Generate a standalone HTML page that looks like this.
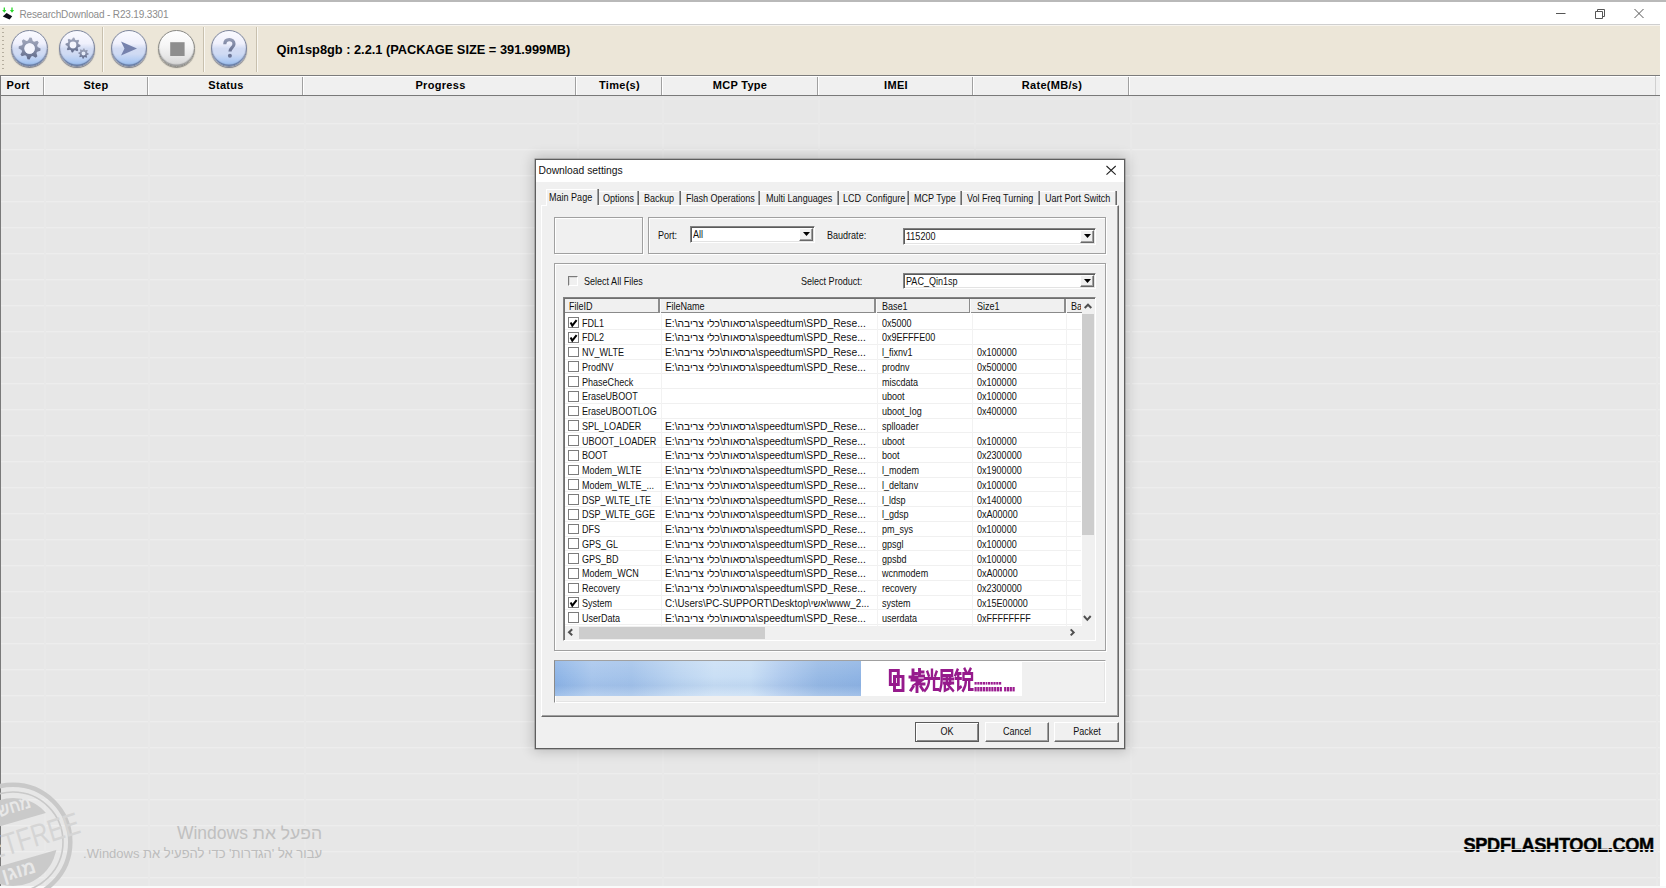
<!DOCTYPE html>
<html><head><meta charset="utf-8">
<style>
*{box-sizing:border-box}
html,body{margin:0;padding:0}
body{width:1666px;height:888px;overflow:hidden;position:relative;background:#fff;font-family:"Liberation Sans",sans-serif;color:#000}
.a{position:absolute}
.t{position:absolute;white-space:nowrap;line-height:1}
.hs{position:absolute;top:77px;width:2px;height:18px;background:#a0a0a0;border-right:1px solid #fff}
.ht{position:absolute;top:79px;font-size:11px;font-weight:bold;line-height:12px;text-align:center;white-space:nowrap;letter-spacing:0.3px}
.d{position:absolute;white-space:nowrap;line-height:1;font-size:10.5px;transform:scaleX(.86);transform-origin:0 0;color:#111}
.tb{position:absolute;border-radius:50%}
</style></head><body>

<div class="a" style="left:0;top:0;width:1666px;height:2px;background:#b9b9b9"></div>
<div class="a" style="left:0;top:24px;width:1660px;height:1px;background:#cfcfcf"></div>
<div class="t" style="left:19.5px;top:10px;font-size:10px;color:#8c8c8c;letter-spacing:-0.15px">ResearchDownload - R23.19.3301</div>
<svg class="a" style="left:0;top:0" width="18" height="24" viewBox="0 0 18 24">
<path d="M4.3 7.5v3.5M12 7.5v3.5" stroke="#2bd62b" stroke-width="1.3"/>
<path d="M2.2 10h4.2L4.3 12.8zM9.9 10h4.2L12 12.8z" fill="#2bd62b"/>
<path d="M2.8 16.4L6.6 13l5.6 3.3-2.6 3.3z" fill="#0d0d18"/>
</svg>
<svg class="a" style="left:1550px;top:4px" width="100" height="20" viewBox="0 0 100 20">
<path d="M6 9.5h9.5" stroke="#555" stroke-width="1"/>
<path d="M45.5 7.5h7v7h-7z M47.5 7.5v-2h7v7h-2" stroke="#555" stroke-width="1" fill="none"/>
<path d="M84.5 5l9 9M93.5 5l-9 9" stroke="#555" stroke-width="1"/>
</svg>
<div class="a" style="left:0;top:25px;width:1660px;height:50px;background:#ece6d8;border-top:1px solid #f7f4ee"></div>
<div class="a" style="left:0;top:75px;width:1660px;height:1px;background:#7c7c7c"></div>
<div class="a" style="left:2px;top:28px;width:2px;height:44px;background:repeating-linear-gradient(#b5ae9f 0 1px,transparent 1px 4px)"></div>
<div class="a" style="left:102px;top:27px;width:2px;height:45px;border-left:1px solid #c8c0ae;border-right:1px solid #faf8f2"></div>
<div class="a" style="left:203px;top:27px;width:2px;height:45px;border-left:1px solid #c8c0ae;border-right:1px solid #faf8f2"></div>
<div class="a" style="left:256px;top:27px;width:2px;height:45px;border-left:1px solid #c8c0ae;border-right:1px solid #faf8f2"></div>
<div class="tb" style="left:11.200000000000003px;top:30.300000000000004px;width:36.8px;height:36.8px;background:linear-gradient(180deg,#fafaff 0%,#eff0fc 36%,#d3dcf3 50%,#cfdaf3 66%,#b9cff3 80%,#a3c3f0 92%);border:1px solid #7e879f;box-shadow:inset 0 -1.5px 1px rgba(50,60,95,.55),0 1px 1px rgba(40,50,80,.6)"></div>
<div class="tb" style="left:58.6px;top:30.300000000000004px;width:36.8px;height:36.8px;background:linear-gradient(180deg,#fafaff 0%,#eff0fc 36%,#d3dcf3 50%,#cfdaf3 66%,#b9cff3 80%,#a3c3f0 92%);border:1px solid #7e879f;box-shadow:inset 0 -1.5px 1px rgba(50,60,95,.55),0 1px 1px rgba(40,50,80,.6)"></div>
<div class="tb" style="left:110.6px;top:30.300000000000004px;width:36.8px;height:36.8px;background:linear-gradient(180deg,#fafaff 0%,#eff0fc 36%,#d3dcf3 50%,#cfdaf3 66%,#b9cff3 80%,#a3c3f0 92%);border:1px solid #7e879f;box-shadow:inset 0 -1.5px 1px rgba(50,60,95,.55),0 1px 1px rgba(40,50,80,.6)"></div>
<div class="tb" style="left:158.1px;top:30.300000000000004px;width:36.8px;height:36.8px;background:linear-gradient(180deg,#ffffff 0%,#f6f6f6 40%,#e8e8e8 70%,#d2d2d2 100%);border:1px solid #8a8a86;box-shadow:inset 0 -1.5px 1px rgba(80,80,80,.45),0 1px 1px rgba(60,60,60,.55)"></div>
<div class="tb" style="left:210.6px;top:30.300000000000004px;width:36.8px;height:36.8px;background:linear-gradient(180deg,#fafaff 0%,#eff0fc 36%,#d3dcf3 50%,#cfdaf3 66%,#b9cff3 80%,#a3c3f0 92%);border:1px solid #7e879f;box-shadow:inset 0 -1.5px 1px rgba(50,60,95,.55),0 1px 1px rgba(40,50,80,.6)"></div>
<svg class="a" style="left:0;top:25px" width="260" height="50" viewBox="0 25 260 50"><defs><linearGradient id="qg" x1="0" y1="0" x2="0" y2="1"><stop offset="0" stop-color="#9098b2"/><stop offset="1" stop-color="#6a7392"/></linearGradient><linearGradient id="gg" x1="0" y1="0" x2="0" y2="1"><stop offset="0" stop-color="#a3a9bd"/><stop offset="0.45" stop-color="#8a92ab"/><stop offset="1" stop-color="#5f6989"/></linearGradient></defs><path fill-rule="evenodd" fill="url(#gg)" d="M29.60 37.50 L31.75 37.71 L32.74 40.92 L34.16 41.68 L37.38 40.72 L38.75 42.39 L37.18 45.36 L37.64 46.90 L40.60 48.50 L40.39 50.65 L37.18 51.64 L36.42 53.06 L37.38 56.28 L35.71 57.65 L32.74 56.08 L31.20 56.54 L29.60 59.50 L27.45 59.29 L26.46 56.08 L25.04 55.32 L21.82 56.28 L20.45 54.61 L22.02 51.64 L21.56 50.10 L18.60 48.50 L18.81 46.35 L22.02 45.36 L22.78 43.94 L21.82 40.72 L23.49 39.35 L26.46 40.92 L28.00 40.46Z M34.800000000000004 48.5 A5.2 5.2 0 1 0 24.400000000000002 48.5 A5.2 5.2 0 1 0 34.800000000000004 48.5Z"/><circle cx="29.6" cy="48.5" r="5.2" fill="#f4f5fd"/><circle cx="73" cy="45" r="3.4" fill="#f4f5fd"/><circle cx="83.5" cy="53.5" r="2" fill="#e6ecf9"/><path fill-rule="evenodd" fill="url(#gg)" d="M73.00 37.50 L74.46 37.64 L75.14 39.83 L76.11 40.34 L78.30 39.70 L79.24 40.83 L78.17 42.86 L78.49 43.91 L80.50 45.00 L80.36 46.46 L78.17 47.14 L77.66 48.11 L78.30 50.30 L77.17 51.24 L75.14 50.17 L74.09 50.49 L73.00 52.50 L71.54 52.36 L70.86 50.17 L69.89 49.66 L67.70 50.30 L66.76 49.17 L67.83 47.14 L67.51 46.09 L65.50 45.00 L65.64 43.54 L67.83 42.86 L68.34 41.89 L67.70 39.70 L68.83 38.76 L70.86 39.83 L71.91 39.51Z M76.4 45 A3.4 3.4 0 1 0 69.6 45 A3.4 3.4 0 1 0 76.4 45Z"/><path fill-rule="evenodd" fill="url(#gg)" d="M83.50 48.30 L84.51 48.40 L84.95 49.99 L85.61 50.34 L87.18 49.82 L87.82 50.61 L87.01 52.05 L87.23 52.76 L88.70 53.50 L88.60 54.51 L87.01 54.95 L86.66 55.61 L87.18 57.18 L86.39 57.82 L84.95 57.01 L84.24 57.23 L83.50 58.70 L82.49 58.60 L82.05 57.01 L81.39 56.66 L79.82 57.18 L79.18 56.39 L79.99 54.95 L79.77 54.24 L78.30 53.50 L78.40 52.49 L79.99 52.05 L80.34 51.39 L79.82 49.82 L80.61 49.18 L82.05 49.99 L82.76 49.77Z M85.5 53.5 A2 2 0 1 0 81.5 53.5 A2 2 0 1 0 85.5 53.5Z"/><path d="M121 41.5l16 7-16 7 3.5-7z" fill="#7682ad"/><rect x="170.2" y="42.2" width="14.4" height="13.8" fill="#8e8e8e"/><path d="M224.8 44.3c0-3.2 2.1-4.6 4.6-4.6s4.6 1.6 4.6 4.2c0 3.6-4 4-4 7.6" stroke="url(#qg)" stroke-width="3.2" fill="none"/><circle cx="229.9" cy="55.8" r="2" fill="#6d7696"/></svg>
<div class="t" style="left:276.5px;top:43.5px;font-size:12.8px;font-weight:bold">Qin1sp8gb : 2.2.1 (PACKAGE SIZE = 391.999MB)</div>
<div class="a" style="left:0;top:76px;width:1660px;height:20px;background:#f0f0f0;border-top:1px solid #fff;border-bottom:1px solid #7a7a7a"></div>
<div class="ht" style="left:6.5px">Port</div>
<div class="ht" style="left:44px;width:104px">Step</div>
<div class="ht" style="left:148px;width:156px">Status</div>
<div class="ht" style="left:304px;width:273px">Progress</div>
<div class="ht" style="left:577px;width:85px">Time(s)</div>
<div class="ht" style="left:662px;width:156px">MCP Type</div>
<div class="ht" style="left:818px;width:156px">IMEI</div>
<div class="ht" style="left:974px;width:156px">Rate(MB/s)</div>
<div class="hs" style="left:42.5px"></div>
<div class="hs" style="left:146.5px"></div>
<div class="hs" style="left:302px"></div>
<div class="hs" style="left:575px"></div>
<div class="hs" style="left:661px"></div>
<div class="hs" style="left:817px"></div>
<div class="hs" style="left:972px"></div>
<div class="hs" style="left:1128px"></div>
<div class="a" style="left:1655px;top:76px;width:1px;height:19px;background:#d0d0d0"></div>
<div class="a" style="left:1px;top:96px;width:1659px;height:790px;background:#e7e7e7"></div>
<div class="a" style="left:0;top:75px;width:1px;height:811px;background:#7a7a7a"></div>
<div class="a" style="left:1px;top:97.5px;width:1659px;height:2px;background:#e9e9e9"></div>
<div class="a" style="left:1px;top:123.30px;width:1659px;height:2px;background:linear-gradient(#ededed 50%,#e9e9e9 50%)"></div>
<div class="a" style="left:1px;top:149.28px;width:1659px;height:2px;background:linear-gradient(#ededed 50%,#e9e9e9 50%)"></div>
<div class="a" style="left:1px;top:175.26px;width:1659px;height:2px;background:linear-gradient(#ededed 50%,#e9e9e9 50%)"></div>
<div class="a" style="left:1px;top:201.24px;width:1659px;height:2px;background:linear-gradient(#ededed 50%,#e9e9e9 50%)"></div>
<div class="a" style="left:1px;top:227.22px;width:1659px;height:2px;background:linear-gradient(#ededed 50%,#e9e9e9 50%)"></div>
<div class="a" style="left:1px;top:253.20px;width:1659px;height:2px;background:linear-gradient(#ededed 50%,#e9e9e9 50%)"></div>
<div class="a" style="left:1px;top:279.18px;width:1659px;height:2px;background:linear-gradient(#ededed 50%,#e9e9e9 50%)"></div>
<div class="a" style="left:1px;top:305.16px;width:1659px;height:2px;background:linear-gradient(#ededed 50%,#e9e9e9 50%)"></div>
<div class="a" style="left:1px;top:331.14px;width:1659px;height:2px;background:linear-gradient(#ededed 50%,#e9e9e9 50%)"></div>
<div class="a" style="left:1px;top:357.12px;width:1659px;height:2px;background:linear-gradient(#ededed 50%,#e9e9e9 50%)"></div>
<div class="a" style="left:1px;top:383.10px;width:1659px;height:2px;background:linear-gradient(#ededed 50%,#e9e9e9 50%)"></div>
<div class="a" style="left:1px;top:409.08px;width:1659px;height:2px;background:linear-gradient(#ededed 50%,#e9e9e9 50%)"></div>
<div class="a" style="left:1px;top:435.06px;width:1659px;height:2px;background:linear-gradient(#ededed 50%,#e9e9e9 50%)"></div>
<div class="a" style="left:1px;top:461.04px;width:1659px;height:2px;background:linear-gradient(#ededed 50%,#e9e9e9 50%)"></div>
<div class="a" style="left:1px;top:487.02px;width:1659px;height:2px;background:linear-gradient(#ededed 50%,#e9e9e9 50%)"></div>
<div class="a" style="left:1px;top:513.00px;width:1659px;height:2px;background:linear-gradient(#ededed 50%,#e9e9e9 50%)"></div>
<div class="a" style="left:1px;top:538.98px;width:1659px;height:2px;background:linear-gradient(#ededed 50%,#e9e9e9 50%)"></div>
<div class="a" style="left:1px;top:564.96px;width:1659px;height:2px;background:linear-gradient(#ededed 50%,#e9e9e9 50%)"></div>
<div class="a" style="left:1px;top:590.94px;width:1659px;height:2px;background:linear-gradient(#ededed 50%,#e9e9e9 50%)"></div>
<div class="a" style="left:1px;top:616.92px;width:1659px;height:2px;background:linear-gradient(#ededed 50%,#e9e9e9 50%)"></div>
<div class="a" style="left:1px;top:642.90px;width:1659px;height:2px;background:linear-gradient(#ededed 50%,#e9e9e9 50%)"></div>
<div class="a" style="left:1px;top:668.88px;width:1659px;height:2px;background:linear-gradient(#ededed 50%,#e9e9e9 50%)"></div>
<div class="a" style="left:1px;top:694.86px;width:1659px;height:2px;background:linear-gradient(#ededed 50%,#e9e9e9 50%)"></div>
<div class="a" style="left:1px;top:720.84px;width:1659px;height:2px;background:linear-gradient(#ededed 50%,#e9e9e9 50%)"></div>
<div class="a" style="left:1px;top:746.82px;width:1659px;height:2px;background:linear-gradient(#ededed 50%,#e9e9e9 50%)"></div>
<div class="a" style="left:1px;top:772.80px;width:1659px;height:2px;background:linear-gradient(#ededed 50%,#e9e9e9 50%)"></div>
<div class="a" style="left:1px;top:798.78px;width:1659px;height:2px;background:linear-gradient(#ededed 50%,#e9e9e9 50%)"></div>
<div class="a" style="left:1px;top:824.76px;width:1659px;height:2px;background:linear-gradient(#ededed 50%,#e9e9e9 50%)"></div>
<div class="a" style="left:1px;top:850.74px;width:1659px;height:2px;background:linear-gradient(#ededed 50%,#e9e9e9 50%)"></div>
<div class="a" style="left:1px;top:876.72px;width:1659px;height:2px;background:linear-gradient(#ededed 50%,#e9e9e9 50%)"></div>
<div class="a" style="left:44px;top:96px;width:2px;height:790px;background:#e9e9e9"></div>
<div class="a" style="left:148px;top:96px;width:2px;height:790px;background:#e9e9e9"></div>
<div class="a" style="left:304px;top:96px;width:2px;height:790px;background:#e9e9e9"></div>
<div class="a" style="left:577px;top:96px;width:2px;height:790px;background:#e9e9e9"></div>
<div class="a" style="left:662px;top:96px;width:2px;height:790px;background:#e9e9e9"></div>
<div class="a" style="left:818px;top:96px;width:2px;height:790px;background:#e9e9e9"></div>
<div class="a" style="left:974px;top:96px;width:2px;height:790px;background:#e9e9e9"></div>
<div class="a" style="left:1130px;top:96px;width:2px;height:790px;background:#e9e9e9"></div>
<div class="a" style="left:1656px;top:96px;width:2px;height:790px;background:#e9e9e9"></div>
<div class="a" style="left:0;top:886px;width:1666px;height:2px;background:#fafafa"></div>
<svg class="a" style="left:0;top:770px" width="100" height="118" viewBox="0 770 100 118">
<defs><clipPath id="cc"><circle cx="13" cy="842" r="44"/></clipPath></defs>
<g fill="none" stroke="#c9c9c9">
<circle cx="13" cy="842" r="57.3" stroke-width="4.5"/>
<circle cx="13" cy="842" r="50" stroke-width="1.6"/>
</g>
<g clip-path="url(#cc)" fill="#cacaca">
<path d="M-40 838 L70 806 L70 780 L-40 780Z"/>
<path d="M-40 878 L70 846 L70 900 L-40 900Z"/>
</g>
<text x="0" y="0" transform="translate(-10 820) rotate(-17) scale(0.85 1)" font-family="Liberation Sans" font-weight="bold" font-size="18" fill="#e8e8e8">מחשב</text>
<text x="0" y="0" transform="translate(4 882) rotate(-17)" font-family="Liberation Sans" font-weight="bold" font-size="19" fill="#e8e8e8">מוגן</text>
<text x="0" y="0" text-anchor="end" transform="translate(82 832.5) rotate(-17) scale(0.78 1)" font-family="Liberation Sans" font-size="31" fill="#d5d5d5">NETFREE</text>
</svg>
<div class="t" style="right:1344px;top:824.5px;font-size:17.5px;color:#c0c0c0;direction:rtl">הפעל את Windows</div>
<div class="t" style="right:1344px;top:847px;font-size:13px;color:#bcbcbc;direction:rtl">עבור אל 'הגדרות' כדי להפעיל את Windows.</div>
<div class="a" style="left:1460px;top:830px;width:206px;height:19.3px;overflow:hidden"><div class="t" style="left:3.5px;top:5.5px;font-size:18.2px;font-weight:bold;letter-spacing:-0.33px;-webkit-text-stroke:0.45px #000">SPDFLASHTOOL.COM</div></div>
<div class="a" style="left:1460px;top:850.3px;width:206px;height:2px;overflow:hidden"><div class="t" style="left:3.5px;top:-13.8px;font-size:18.2px;font-weight:bold;letter-spacing:-0.33px;-webkit-text-stroke:0.45px #000">SPDFLASHTOOL.COM</div></div>
<div class="a" style="left:535px;top:159px;width:590px;height:590px;background:#f0f0f0;border:1px solid #5e5e5e;box-shadow:0 0 0 0.5px #8a8a8a,0 0 12px 2px rgba(0,0,0,.2)"></div>
<div class="a" style="left:536px;top:160px;width:588px;height:22px;background:#fff"></div>
<div class="t" style="left:538.5px;top:166px;font-size:10.3px;color:#111">Download settings</div>
<svg class="a" style="left:1100px;top:160px" width="22" height="20" viewBox="0 0 22 20"><path d="M6.5 6l9.2 8.6M15.7 6l-9.2 8.6" stroke="#222" stroke-width="1.1"/></svg>
<div class="a" style="left:541px;top:205px;width:578px;height:511.70000000000005px;border-left:1px solid #fff;border-top:1px solid #fff;border-right:1px solid #696969;border-bottom:1px solid #696969;box-shadow:inset -1px -1px 0 #a0a0a0"></div>
<div class="a" style="left:545.6px;top:189px;width:52.39999999999998px;height:17px;background:#f0f0f0;border-top:1px solid #fff;border-left:1px solid #fff"></div>
<div class="a" style="left:597px;top:189px;width:2px;height:16px;border-left:1px solid #a0a0a0;border-right:1px solid #696969"></div>
<div class="d" style="left:548.9px;top:191.5px">Main Page</div>
<div class="a" style="left:599px;top:191px;width:39.299999999999955px;height:1px;background:#fff"></div>
<div class="a" style="left:637.3px;top:191px;width:2px;height:14px;border-left:1px solid #a0a0a0;border-right:1px solid #696969"></div>
<div class="d" style="left:602.7px;top:193.4px">Options</div>
<div class="a" style="left:639.3px;top:191px;width:40.700000000000045px;height:1px;background:#fff"></div>
<div class="a" style="left:679px;top:191px;width:2px;height:14px;border-left:1px solid #a0a0a0;border-right:1px solid #696969"></div>
<div class="d" style="left:644.4px;top:193.4px">Backup</div>
<div class="a" style="left:681px;top:191px;width:78px;height:1px;background:#fff"></div>
<div class="a" style="left:758px;top:191px;width:2px;height:14px;border-left:1px solid #a0a0a0;border-right:1px solid #696969"></div>
<div class="d" style="left:686.3px;top:193.4px">Flash Operations</div>
<div class="a" style="left:760px;top:191px;width:78px;height:1px;background:#fff"></div>
<div class="a" style="left:837px;top:191px;width:2px;height:14px;border-left:1px solid #a0a0a0;border-right:1px solid #696969"></div>
<div class="d" style="left:765.5px;top:193.4px">Multi Languages</div>
<div class="a" style="left:839px;top:191px;width:68.5px;height:1px;background:#fff"></div>
<div class="a" style="left:906.5px;top:191px;width:2px;height:14px;border-left:1px solid #a0a0a0;border-right:1px solid #696969"></div>
<div class="d" style="left:843.3px;top:193.4px">LCD&nbsp; Configure</div>
<div class="a" style="left:908.5px;top:191px;width:52.5px;height:1px;background:#fff"></div>
<div class="a" style="left:960px;top:191px;width:2px;height:14px;border-left:1px solid #a0a0a0;border-right:1px solid #696969"></div>
<div class="d" style="left:913.6px;top:193.4px">MCP Type</div>
<div class="a" style="left:962px;top:191px;width:76.59999999999991px;height:1px;background:#fff"></div>
<div class="a" style="left:1037.6px;top:191px;width:2px;height:14px;border-left:1px solid #a0a0a0;border-right:1px solid #696969"></div>
<div class="d" style="left:967px;top:193.4px">Vol Freq Turning</div>
<div class="a" style="left:1039.6px;top:191px;width:75.90000000000009px;height:1px;background:#fff"></div>
<div class="a" style="left:1114.5px;top:191px;width:2px;height:14px;border-left:1px solid #a0a0a0;border-right:1px solid #696969"></div>
<div class="d" style="left:1044.8px;top:193.4px">Uart Port Switch</div>
<div class="a" style="left:554px;top:217px;width:89px;height:37px;border:1px solid #a0a0a0;box-shadow:inset 1px 1px 0 #fff, 1px 1px 0 #fff"></div>
<div class="a" style="left:648px;top:217px;width:458px;height:37px;border:1px solid #a0a0a0;box-shadow:inset 1px 1px 0 #fff, 1px 1px 0 #fff"></div>
<div class="a" style="left:554px;top:263px;width:552px;height:388px;border:1px solid #a0a0a0;box-shadow:inset 1px 1px 0 #fff, 1px 1px 0 #fff"></div>
<div class="a" style="left:554px;top:660px;width:552px;height:43px;border-top:1px solid #a0a0a0;border-left:1px solid #8a8a8a;border-right:1px solid #fff;border-bottom:1px solid #fff;box-shadow:inset 1px 1px 0 #fff, inset -1px -1px 0 #e4e4e4"></div>
<div class="d" style="left:658.4px;top:230px">Port:</div>
<div class="a" style="left:690px;top:225.5px;width:125px;height:17.0px;background:#fff;border-top:1px solid #828282;border-left:1px solid #828282;border-right:1px solid #fff;border-bottom:1px solid #fff;box-shadow:inset 1px 1px 0 #5a5a5a, inset -1px -1px 0 #e3e3e3"></div>
<div class="a" style="left:799px;top:227.5px;width:14px;height:13.0px;background:#f0f0f0;border-top:1px solid #fff;border-left:1px solid #fff;border-right:1px solid #696969;border-bottom:1px solid #696969;box-shadow:inset -1px -1px 0 #a0a0a0"></div>
<svg class="a" style="left:803px;top:232.0px" width="7" height="4" viewBox="0 0 7 4"><path d="M0 0h7L3.5 4z" fill="#000"/></svg>
<div class="d" style="left:693px;top:229.4px">All</div>
<div class="d" style="left:827.3px;top:230px">Baudrate:</div>
<div class="a" style="left:903px;top:227.5px;width:192.5px;height:17.0px;background:#fff;border-top:1px solid #828282;border-left:1px solid #828282;border-right:1px solid #fff;border-bottom:1px solid #fff;box-shadow:inset 1px 1px 0 #5a5a5a, inset -1px -1px 0 #e3e3e3"></div>
<div class="a" style="left:1079.5px;top:229.5px;width:14px;height:13.0px;background:#f0f0f0;border-top:1px solid #fff;border-left:1px solid #fff;border-right:1px solid #696969;border-bottom:1px solid #696969;box-shadow:inset -1px -1px 0 #a0a0a0"></div>
<svg class="a" style="left:1083.5px;top:234.0px" width="7" height="4" viewBox="0 0 7 4"><path d="M0 0h7L3.5 4z" fill="#000"/></svg>
<div class="d" style="left:906px;top:231.4px">115200</div>
<div class="a" style="left:567.8px;top:275.8px;width:10px;height:10px;background:#f0f0f0;border-top:1.6px solid #7a7a7a;border-left:1.6px solid #7a7a7a;border-right:1px solid #fff;border-bottom:1px solid #fff;box-shadow:inset 1px 1px 0 #d8d8d8"></div>
<div class="d" style="left:583.7px;top:275.9px">Select All Files</div>
<div class="d" style="left:800.7px;top:276.4px">Select Product:</div>
<div class="a" style="left:903px;top:272.5px;width:192.5px;height:16.5px;background:#fff;border-top:1px solid #828282;border-left:1px solid #828282;border-right:1px solid #fff;border-bottom:1px solid #fff;box-shadow:inset 1px 1px 0 #5a5a5a, inset -1px -1px 0 #e3e3e3"></div>
<div class="a" style="left:1079.5px;top:274.5px;width:14px;height:12.5px;background:#f0f0f0;border-top:1px solid #fff;border-left:1px solid #fff;border-right:1px solid #696969;border-bottom:1px solid #696969;box-shadow:inset -1px -1px 0 #a0a0a0"></div>
<svg class="a" style="left:1083.5px;top:278.75px" width="7" height="4" viewBox="0 0 7 4"><path d="M0 0h7L3.5 4z" fill="#000"/></svg>
<div class="d" style="left:906px;top:276.15px">PAC_Qin1sp</div>
<div class="a" style="left:563px;top:297px;width:533px;height:344px;background:#fff;border-top:1px solid #828282;border-left:1px solid #828282;border-right:1px solid #fff;border-bottom:1px solid #fff;box-shadow:inset 1px 1px 0 #6e6e6e"></div>
<div class="a" style="left:565px;top:299px;width:516.5px;height:14px;background:#f0f0f0;border-bottom:1px solid #8a8a8a"></div>
<div class="a" style="left:658.0px;top:299px;width:2.5px;height:14px;background:#8c8c8c;border-right:1px solid #fafafa"></div>
<div class="a" style="left:874.0px;top:299px;width:2.5px;height:14px;background:#8c8c8c;border-right:1px solid #fafafa"></div>
<div class="a" style="left:968.9px;top:299px;width:2.5px;height:14px;background:#8c8c8c;border-right:1px solid #fafafa"></div>
<div class="a" style="left:1064.1px;top:299px;width:2.5px;height:14px;background:#8c8c8c;border-right:1px solid #fafafa"></div>
<div class="d" style="left:569.3px;top:301px">FileID</div>
<div class="d" style="left:665.6px;top:301px">FileName</div>
<div class="d" style="left:881.8px;top:301px">Base1</div>
<div class="d" style="left:976.5px;top:301px">Size1</div>
<div class="a" style="left:1071px;top:299px;width:10px;height:14px;overflow:hidden"><div class="d" style="left:0.3px;top:2px">Ba</div></div>
<div class="a" style="left:565px;top:329.00px;width:516px;height:1px;background:#f0f0f0"></div>
<div class="a" style="left:568.2px;top:317.20px;width:10.7px;height:10.6px;background:#fff;border:1.6px solid #7c7c7c"></div>
<svg class="a" style="left:568.2px;top:317.20px" width="11" height="11" viewBox="0 0 11 11"><path d="M2.6 5.6l1.7 3 4.3-5.4" stroke="#000" stroke-width="2" fill="none"/></svg>
<div class="d" style="left:582.4px;top:317.74px">FDL1</div>
<div class="d" style="left:665.4px;top:317.74px;transform:scaleX(0.98)">E:\גרסאות\כלי צריבה\speedtum\SPD_Rese...</div>
<div class="d" style="left:881.8px;top:317.74px">0x5000</div>
<div class="a" style="left:565px;top:343.75px;width:516px;height:1px;background:#f0f0f0"></div>
<div class="a" style="left:568.2px;top:331.95px;width:10.7px;height:10.6px;background:#fff;border:1.6px solid #7c7c7c"></div>
<svg class="a" style="left:568.2px;top:331.95px" width="11" height="11" viewBox="0 0 11 11"><path d="M2.6 5.6l1.7 3 4.3-5.4" stroke="#000" stroke-width="2" fill="none"/></svg>
<div class="d" style="left:582.4px;top:332.49px">FDL2</div>
<div class="d" style="left:665.4px;top:332.49px;transform:scaleX(0.98)">E:\גרסאות\כלי צריבה\speedtum\SPD_Rese...</div>
<div class="d" style="left:881.8px;top:332.49px">0x9EFFFE00</div>
<div class="a" style="left:565px;top:358.50px;width:516px;height:1px;background:#f0f0f0"></div>
<div class="a" style="left:568.2px;top:346.70px;width:10.7px;height:10.6px;background:#fff;border:1.6px solid #7c7c7c"></div>
<div class="d" style="left:582.4px;top:347.24px">NV_WLTE</div>
<div class="d" style="left:665.4px;top:347.24px;transform:scaleX(0.98)">E:\גרסאות\כלי צריבה\speedtum\SPD_Rese...</div>
<div class="d" style="left:881.8px;top:347.24px">l_fixnv1</div>
<div class="d" style="left:976.5px;top:347.24px">0x100000</div>
<div class="a" style="left:565px;top:373.25px;width:516px;height:1px;background:#f0f0f0"></div>
<div class="a" style="left:568.2px;top:361.45px;width:10.7px;height:10.6px;background:#fff;border:1.6px solid #7c7c7c"></div>
<div class="d" style="left:582.4px;top:361.99px">ProdNV</div>
<div class="d" style="left:665.4px;top:361.99px;transform:scaleX(0.98)">E:\גרסאות\כלי צריבה\speedtum\SPD_Rese...</div>
<div class="d" style="left:881.8px;top:361.99px">prodnv</div>
<div class="d" style="left:976.5px;top:361.99px">0x500000</div>
<div class="a" style="left:565px;top:388.00px;width:516px;height:1px;background:#f0f0f0"></div>
<div class="a" style="left:568.2px;top:376.20px;width:10.7px;height:10.6px;background:#fff;border:1.6px solid #7c7c7c"></div>
<div class="d" style="left:582.4px;top:376.74px">PhaseCheck</div>
<div class="d" style="left:881.8px;top:376.74px">miscdata</div>
<div class="d" style="left:976.5px;top:376.74px">0x100000</div>
<div class="a" style="left:565px;top:402.75px;width:516px;height:1px;background:#f0f0f0"></div>
<div class="a" style="left:568.2px;top:390.95px;width:10.7px;height:10.6px;background:#fff;border:1.6px solid #7c7c7c"></div>
<div class="d" style="left:582.4px;top:391.49px">EraseUBOOT</div>
<div class="d" style="left:881.8px;top:391.49px">uboot</div>
<div class="d" style="left:976.5px;top:391.49px">0x100000</div>
<div class="a" style="left:565px;top:417.50px;width:516px;height:1px;background:#f0f0f0"></div>
<div class="a" style="left:568.2px;top:405.70px;width:10.7px;height:10.6px;background:#fff;border:1.6px solid #7c7c7c"></div>
<div class="d" style="left:582.4px;top:406.24px">EraseUBOOTLOG</div>
<div class="d" style="left:881.8px;top:406.24px">uboot_log</div>
<div class="d" style="left:976.5px;top:406.24px">0x400000</div>
<div class="a" style="left:565px;top:432.25px;width:516px;height:1px;background:#f0f0f0"></div>
<div class="a" style="left:568.2px;top:420.45px;width:10.7px;height:10.6px;background:#fff;border:1.6px solid #7c7c7c"></div>
<div class="d" style="left:582.4px;top:420.99px">SPL_LOADER</div>
<div class="d" style="left:665.4px;top:420.99px;transform:scaleX(0.98)">E:\גרסאות\כלי צריבה\speedtum\SPD_Rese...</div>
<div class="d" style="left:881.8px;top:420.99px">splloader</div>
<div class="a" style="left:565px;top:447.00px;width:516px;height:1px;background:#f0f0f0"></div>
<div class="a" style="left:568.2px;top:435.20px;width:10.7px;height:10.6px;background:#fff;border:1.6px solid #7c7c7c"></div>
<div class="d" style="left:582.4px;top:435.74px">UBOOT_LOADER</div>
<div class="d" style="left:665.4px;top:435.74px;transform:scaleX(0.98)">E:\גרסאות\כלי צריבה\speedtum\SPD_Rese...</div>
<div class="d" style="left:881.8px;top:435.74px">uboot</div>
<div class="d" style="left:976.5px;top:435.74px">0x100000</div>
<div class="a" style="left:565px;top:461.75px;width:516px;height:1px;background:#f0f0f0"></div>
<div class="a" style="left:568.2px;top:449.95px;width:10.7px;height:10.6px;background:#fff;border:1.6px solid #7c7c7c"></div>
<div class="d" style="left:582.4px;top:450.49px">BOOT</div>
<div class="d" style="left:665.4px;top:450.49px;transform:scaleX(0.98)">E:\גרסאות\כלי צריבה\speedtum\SPD_Rese...</div>
<div class="d" style="left:881.8px;top:450.49px">boot</div>
<div class="d" style="left:976.5px;top:450.49px">0x2300000</div>
<div class="a" style="left:565px;top:476.50px;width:516px;height:1px;background:#f0f0f0"></div>
<div class="a" style="left:568.2px;top:464.70px;width:10.7px;height:10.6px;background:#fff;border:1.6px solid #7c7c7c"></div>
<div class="d" style="left:582.4px;top:465.24px">Modem_WLTE</div>
<div class="d" style="left:665.4px;top:465.24px;transform:scaleX(0.98)">E:\גרסאות\כלי צריבה\speedtum\SPD_Rese...</div>
<div class="d" style="left:881.8px;top:465.24px">l_modem</div>
<div class="d" style="left:976.5px;top:465.24px">0x1900000</div>
<div class="a" style="left:565px;top:491.25px;width:516px;height:1px;background:#f0f0f0"></div>
<div class="a" style="left:568.2px;top:479.45px;width:10.7px;height:10.6px;background:#fff;border:1.6px solid #7c7c7c"></div>
<div class="d" style="left:582.4px;top:479.99px">Modem_WLTE_...</div>
<div class="d" style="left:665.4px;top:479.99px;transform:scaleX(0.98)">E:\גרסאות\כלי צריבה\speedtum\SPD_Rese...</div>
<div class="d" style="left:881.8px;top:479.99px">l_deltanv</div>
<div class="d" style="left:976.5px;top:479.99px">0x100000</div>
<div class="a" style="left:565px;top:506.00px;width:516px;height:1px;background:#f0f0f0"></div>
<div class="a" style="left:568.2px;top:494.20px;width:10.7px;height:10.6px;background:#fff;border:1.6px solid #7c7c7c"></div>
<div class="d" style="left:582.4px;top:494.74px">DSP_WLTE_LTE</div>
<div class="d" style="left:665.4px;top:494.74px;transform:scaleX(0.98)">E:\גרסאות\כלי צריבה\speedtum\SPD_Rese...</div>
<div class="d" style="left:881.8px;top:494.74px">l_ldsp</div>
<div class="d" style="left:976.5px;top:494.74px">0x1400000</div>
<div class="a" style="left:565px;top:520.75px;width:516px;height:1px;background:#f0f0f0"></div>
<div class="a" style="left:568.2px;top:508.95px;width:10.7px;height:10.6px;background:#fff;border:1.6px solid #7c7c7c"></div>
<div class="d" style="left:582.4px;top:509.49px">DSP_WLTE_GGE</div>
<div class="d" style="left:665.4px;top:509.49px;transform:scaleX(0.98)">E:\גרסאות\כלי צריבה\speedtum\SPD_Rese...</div>
<div class="d" style="left:881.8px;top:509.49px">l_gdsp</div>
<div class="d" style="left:976.5px;top:509.49px">0xA00000</div>
<div class="a" style="left:565px;top:535.50px;width:516px;height:1px;background:#f0f0f0"></div>
<div class="a" style="left:568.2px;top:523.70px;width:10.7px;height:10.6px;background:#fff;border:1.6px solid #7c7c7c"></div>
<div class="d" style="left:582.4px;top:524.24px">DFS</div>
<div class="d" style="left:665.4px;top:524.24px;transform:scaleX(0.98)">E:\גרסאות\כלי צריבה\speedtum\SPD_Rese...</div>
<div class="d" style="left:881.8px;top:524.24px">pm_sys</div>
<div class="d" style="left:976.5px;top:524.24px">0x100000</div>
<div class="a" style="left:565px;top:550.25px;width:516px;height:1px;background:#f0f0f0"></div>
<div class="a" style="left:568.2px;top:538.45px;width:10.7px;height:10.6px;background:#fff;border:1.6px solid #7c7c7c"></div>
<div class="d" style="left:582.4px;top:538.99px">GPS_GL</div>
<div class="d" style="left:665.4px;top:538.99px;transform:scaleX(0.98)">E:\גרסאות\כלי צריבה\speedtum\SPD_Rese...</div>
<div class="d" style="left:881.8px;top:538.99px">gpsgl</div>
<div class="d" style="left:976.5px;top:538.99px">0x100000</div>
<div class="a" style="left:565px;top:565.00px;width:516px;height:1px;background:#f0f0f0"></div>
<div class="a" style="left:568.2px;top:553.20px;width:10.7px;height:10.6px;background:#fff;border:1.6px solid #7c7c7c"></div>
<div class="d" style="left:582.4px;top:553.74px">GPS_BD</div>
<div class="d" style="left:665.4px;top:553.74px;transform:scaleX(0.98)">E:\גרסאות\כלי צריבה\speedtum\SPD_Rese...</div>
<div class="d" style="left:881.8px;top:553.74px">gpsbd</div>
<div class="d" style="left:976.5px;top:553.74px">0x100000</div>
<div class="a" style="left:565px;top:579.75px;width:516px;height:1px;background:#f0f0f0"></div>
<div class="a" style="left:568.2px;top:567.95px;width:10.7px;height:10.6px;background:#fff;border:1.6px solid #7c7c7c"></div>
<div class="d" style="left:582.4px;top:568.49px">Modem_WCN</div>
<div class="d" style="left:665.4px;top:568.49px;transform:scaleX(0.98)">E:\גרסאות\כלי צריבה\speedtum\SPD_Rese...</div>
<div class="d" style="left:881.8px;top:568.49px">wcnmodem</div>
<div class="d" style="left:976.5px;top:568.49px">0xA00000</div>
<div class="a" style="left:565px;top:594.50px;width:516px;height:1px;background:#f0f0f0"></div>
<div class="a" style="left:568.2px;top:582.70px;width:10.7px;height:10.6px;background:#fff;border:1.6px solid #7c7c7c"></div>
<div class="d" style="left:582.4px;top:583.24px">Recovery</div>
<div class="d" style="left:665.4px;top:583.24px;transform:scaleX(0.98)">E:\גרסאות\כלי צריבה\speedtum\SPD_Rese...</div>
<div class="d" style="left:881.8px;top:583.24px">recovery</div>
<div class="d" style="left:976.5px;top:583.24px">0x2300000</div>
<div class="a" style="left:565px;top:609.25px;width:516px;height:1px;background:#f0f0f0"></div>
<div class="a" style="left:568.2px;top:597.45px;width:10.7px;height:10.6px;background:#fff;border:1.6px solid #7c7c7c"></div>
<svg class="a" style="left:568.2px;top:597.45px" width="11" height="11" viewBox="0 0 11 11"><path d="M2.6 5.6l1.7 3 4.3-5.4" stroke="#000" stroke-width="2" fill="none"/></svg>
<div class="d" style="left:582.4px;top:597.99px">System</div>
<div class="d" style="left:665.4px;top:597.99px;transform:scaleX(0.93)">C:\Users\PC-SUPPORT\Desktop\אשי\www_2...</div>
<div class="d" style="left:881.8px;top:597.99px">system</div>
<div class="d" style="left:976.5px;top:597.99px">0x15E00000</div>
<div class="a" style="left:565px;top:624.00px;width:516px;height:1px;background:#f0f0f0"></div>
<div class="a" style="left:568.2px;top:612.20px;width:10.7px;height:10.6px;background:#fff;border:1.6px solid #7c7c7c"></div>
<div class="d" style="left:582.4px;top:612.74px">UserData</div>
<div class="d" style="left:665.4px;top:612.74px;transform:scaleX(0.98)">E:\גרסאות\כלי צריבה\speedtum\SPD_Rese...</div>
<div class="d" style="left:881.8px;top:612.74px">userdata</div>
<div class="d" style="left:976.5px;top:612.74px">0xFFFFFFFF</div>
<div class="a" style="left:660.5px;top:314px;width:1px;height:312px;background:#f2f2f2"></div>
<div class="a" style="left:876.7px;top:314px;width:1px;height:312px;background:#f2f2f2"></div>
<div class="a" style="left:971.9px;top:314px;width:1px;height:312px;background:#f2f2f2"></div>
<div class="a" style="left:1066px;top:314px;width:1px;height:312px;background:#f2f2f2"></div>
<div class="a" style="left:1081.5px;top:299px;width:13.5px;height:327px;background:#f0f0f0"></div>
<div class="a" style="left:1081.5px;top:314px;width:12.5px;height:221px;background:#cdcdcd"></div>
<svg class="a" style="left:1082.5px;top:302px" width="10" height="8" viewBox="0 0 10 8"><path d="M1.7 6l3.3-3.3 3.3 3.3" stroke="#505050" stroke-width="2" fill="none"/></svg>
<svg class="a" style="left:1083px;top:614px" width="10" height="8" viewBox="0 0 10 8"><path d="M0.9 2l3.4 3.8 3.4-3.8" stroke="#505050" stroke-width="2" fill="none"/></svg>
<div class="a" style="left:565px;top:625.5px;width:530px;height:14.5px;background:#f0f0f0"></div>
<div class="a" style="left:579px;top:627px;width:186px;height:11.5px;background:#cdcdcd"></div>
<svg class="a" style="left:567px;top:628px" width="8" height="10" viewBox="0 0 8 10"><path d="M5.2 1.3l-3.2 3 3.2 3" stroke="#505050" stroke-width="2" fill="none"/></svg>
<svg class="a" style="left:1068px;top:628px" width="8" height="10" viewBox="0 0 8 10"><path d="M2.7 1.4l3 3-3 3" stroke="#505050" stroke-width="2" fill="none"/></svg>
<div class="a" style="left:554.5px;top:660.5px;width:306px;height:35.5px;background:linear-gradient(90deg,#8db4e6 0%,#a8c6ec 12%,#a4c3ea 25%,#bcd5f1 40%,#cadff5 52%,#c8def5 64%,#b0cbee 74%,#98bae5 86%,#8fb4e4 100%)"></div>
<div class="a" style="left:554.5px;top:660.5px;width:306px;height:35.5px;background:linear-gradient(180deg,rgba(255,255,255,.12),rgba(255,255,255,0) 45%,rgba(80,120,180,.08) 70%,rgba(255,255,255,.18))"></div>
<div class="a" style="left:860.5px;top:660.5px;width:161px;height:35.5px;background:#fff"></div>
<svg class="a" style="left:886px;top:666px" width="134" height="28" viewBox="0 0 134 28">
<g fill="none" stroke="#961a8c" stroke-width="2.9" stroke-linecap="square">
<path d="M4.3 4.5h8v14h-8z"/><path d="M8.5 10.5h8.5v14h-8.5z"/><path d="M8.5 10.5v8" />
<path d="M27 4v7 M27 7.5h3.5 M24 11h7 M33.5 3.5v6.5h4 M33.5 6h3.5 M26 14h10l-6 4h8 M31 17v8.5 M27 21l-2 3 M35 21l2 3"/>
<path transform="translate(39 0) scale(0.82 1) translate(-43 0)" d="M46 6l1.5 3.5 M57 6l-1.5 3.5 M51.5 4v8 M43 12.5h17 M48 13c0 6-2 9-5 11.5 M54 13v10.5h5"/>
<path transform="translate(54 0) scale(0.81 1) translate(-64 0)" d="M66 4.5h13v5h-13 M66 4.5v10c0 5-1 7-2 10 M69 13h11 M69 17h11 M72.5 10.5v7 M76.5 10.5v7 M70 17.5v7l4-1.5 M74 19l6 5.5"/>
<path transform="translate(69 0) scale(0.81 1) translate(-85 0)" d="M88 4l-2.5 5 M86.5 7.5h5 M86 12.5h6 M89 9v14l3-2 M97 3l1.5 2.5 M104 3l-1.5 2.5 M95.5 7.5h10.5v6h-10.5z M98.5 14c0 5-1.5 8-3.5 10.5 M102.5 14v9.5h4"/>
</g>
<g fill="#9b1c90">
<rect x="88.5" y="16" width="2.2" height="2.6"/><rect x="91.3" y="16" width="2.2" height="2.6"/><rect x="94.1" y="16" width="2.2" height="2.6"/><rect x="96.9" y="16" width="2.2" height="2.6"/><rect x="99.7" y="16" width="1.5" height="2.6"/><rect x="101.8" y="16" width="2.2" height="2.6"/><rect x="104.6" y="16" width="2.2" height="2.6"/><rect x="107.4" y="16" width="2.2" height="2.6"/><rect x="110.2" y="16" width="2.2" height="2.6"/><rect x="113.0" y="16" width="2.2" height="2.6"/><rect x="88.5" y="21" width="2.2" height="4.4"/><rect x="91.3" y="21" width="2.2" height="4.4"/><rect x="94.1" y="21" width="2.2" height="4.4"/><rect x="96.9" y="21" width="2.2" height="4.4"/><rect x="99.7" y="21" width="2.2" height="4.4"/><rect x="102.5" y="21" width="2.2" height="4.4"/><rect x="105.3" y="21" width="2.2" height="4.4"/><rect x="108.1" y="21" width="2.2" height="4.4"/><rect x="110.9" y="21" width="2.2" height="4.4"/><rect x="113.7" y="21" width="2.2" height="4.4"/><rect x="118.1" y="21" width="2.2" height="4.4"/><rect x="120.9" y="21" width="2.2" height="4.4"/><rect x="123.7" y="21" width="2.2" height="4.4"/><rect x="126.5" y="21" width="2.2" height="4.4"/></g></svg>
<div class="a" style="left:914.5px;top:722px;width:64.0px;height:20px;background:#f0f0f0;border:1px solid #5a5a5a;box-shadow:inset 1px 1px 0 #fff, inset -1px -1px 0 #8a8a8a"></div>
<div class="d" style="left:946.5px;top:726.4px;transform:translateX(-50%) scaleX(.86);transform-origin:50% 0">OK</div>
<div class="a" style="left:984.5px;top:722px;width:64.0px;height:20px;background:#f0f0f0;border-top:1px solid #fff;border-left:1px solid #fff;border-right:1px solid #696969;border-bottom:1px solid #696969;box-shadow:inset -1px -1px 0 #a0a0a0"></div>
<div class="d" style="left:1016.5px;top:726.4px;transform:translateX(-50%) scaleX(.86);transform-origin:50% 0">Cancel</div>
<div class="a" style="left:1054px;top:722px;width:65px;height:20px;background:#f0f0f0;border-top:1px solid #fff;border-left:1px solid #fff;border-right:1px solid #696969;border-bottom:1px solid #696969;box-shadow:inset -1px -1px 0 #a0a0a0"></div>
<div class="d" style="left:1086.5px;top:726.4px;transform:translateX(-50%) scaleX(.86);transform-origin:50% 0">Packet</div>
</body></html>
